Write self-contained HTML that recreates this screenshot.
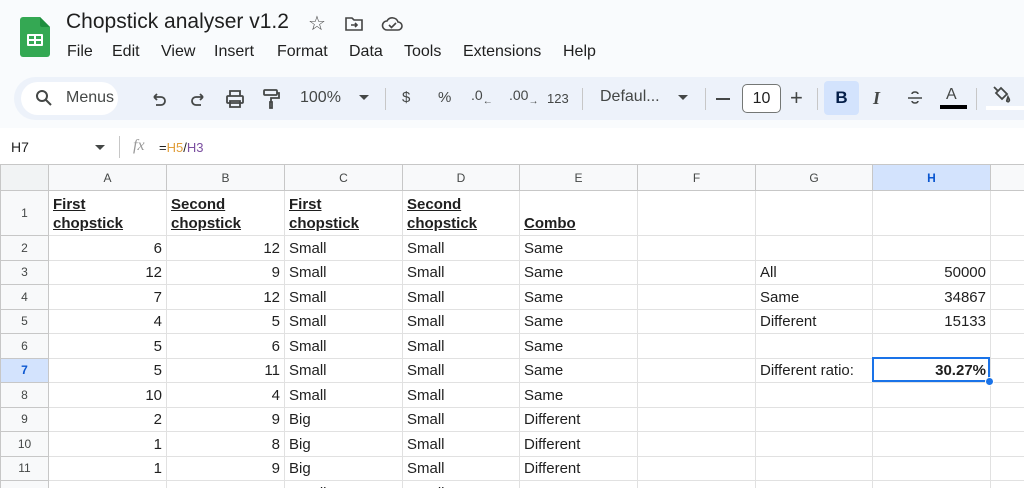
<!DOCTYPE html>
<html><head><meta charset="utf-8"><style>
*{margin:0;padding:0;box-sizing:border-box}
body{width:1024px;height:488px;overflow:hidden;background:#f9fbfd;font-family:"Liberation Sans",Arial,sans-serif;color:#1f1f1f;position:relative}
.a{position:absolute;white-space:nowrap}
.tb{color:#444746;font-size:15px}
#grid{position:absolute;left:0;top:164px;width:1024px;height:324px;background:#fff;overflow:hidden}
table{border-collapse:collapse;table-layout:fixed;position:absolute;left:0;top:0;width:1050px}
td{border:1px solid #e1e1e1;font-size:15px;padding:0 4px;overflow:hidden;white-space:nowrap;height:24.5px;line-height:18px;vertical-align:bottom;padding-bottom:2px}
tr.h td{height:26px;background:#f8f9fa;color:#444746;font-size:12px;text-align:center;vertical-align:middle;border-color:#c7c7c7;padding:0}
td.rn{background:#f8f9fa;color:#444746;font-size:12px;text-align:center;vertical-align:middle;border-color:#c7c7c7;padding:0}
td.r{text-align:right}
td.b{font-weight:bold;text-decoration:underline;line-height:19px}
</style></head><body>
<svg class="a" style="left:20px;top:17px" width="30" height="40" viewBox="0 0 30 40"><path d="M3 0h17l10 10v27a3 3 0 0 1-3 3H3a3 3 0 0 1-3-3V3a3 3 0 0 1 3-3z" fill="#34a853"/><path d="M20 0l10 10H22a2 2 0 0 1-2-2z" fill="#1e8e3e"/><rect x="7" y="17" width="16" height="12" rx="1" fill="#fff"/><rect x="9" y="19" width="5" height="3" fill="#34a853"/><rect x="16" y="19" width="5" height="3" fill="#34a853"/><rect x="9" y="24" width="5" height="3" fill="#34a853"/><rect x="16" y="24" width="5" height="3" fill="#34a853"/></svg>
<div class="a" style="left:66px;top:10px;font-size:21px;color:#1f1f1f">Chopstick analyser v1.2</div>
<div class="a" style="left:308px;top:11px;font-size:20px;color:#444">☆</div>
<svg class="a" style="left:344px;top:16px" width="20" height="16" viewBox="0 0 20 16" fill="none" stroke="#444" stroke-width="1.6"><path d="M2 2h6l2 2h8v10H2z"/><path d="M7 9h6M11 7l2 2-2 2"/></svg>
<svg class="a" style="left:381px;top:15px" width="22" height="18" viewBox="0 0 22 18" fill="none" stroke="#444" stroke-width="1.6"><path d="M6 15h11a4 4 0 0 0 0-8 6 6 0 0 0-11-1 4.5 4.5 0 0 0 0 9z"/><path d="M8 10l2.5 2.5L15 8"/></svg>
<div class="a" style="left:67px;top:43px;font-size:16px">File</div>
<div class="a" style="left:112px;top:43px;font-size:16px">Edit</div>
<div class="a" style="left:161px;top:43px;font-size:16px">View</div>
<div class="a" style="left:214px;top:43px;font-size:16px">Insert</div>
<div class="a" style="left:277px;top:43px;font-size:16px">Format</div>
<div class="a" style="left:349px;top:43px;font-size:16px">Data</div>
<div class="a" style="left:404px;top:43px;font-size:16px">Tools</div>
<div class="a" style="left:463px;top:43px;font-size:16px">Extensions</div>
<div class="a" style="left:563px;top:43px;font-size:16px">Help</div>
<div class="a" style="left:14px;top:77px;width:1030px;height:43px;background:#edf2fa;border-radius:22px"></div>
<div class="a" style="left:21px;top:82px;width:97px;height:33px;background:#fff;border-radius:17px"></div>
<svg class="a" style="left:35px;top:89px" width="18" height="18" viewBox="0 0 18 18" fill="none" stroke="#444746" stroke-width="2"><circle cx="7" cy="7" r="5"/><path d="M11 11l5 5"/></svg>
<div class="a tb" style="left:66px;top:89px;font-size:16px">Menus</div>
<svg class="a" style="left:150px;top:90px" width="18" height="18" viewBox="0 0 18 18" fill="none" stroke="#444746" stroke-width="1.8"><path d="M4 7h7a4 4 0 0 1 0 8H6M4 7l3-3M4 7l3 3"/></svg>
<svg class="a" style="left:189px;top:90px" width="18" height="18" viewBox="0 0 18 18" fill="none" stroke="#444746" stroke-width="1.8"><path d="M14 7H7a4 4 0 0 0 0 8h5M14 7l-3-3M14 7l-3 3"/></svg>
<svg class="a" style="left:225px;top:89px" width="20" height="20" viewBox="0 0 20 20" fill="none" stroke="#444746" stroke-width="1.8"><rect x="2" y="7" width="16" height="7" rx="1"/><path d="M5 7V2h10v5M5 12h10v6H5z"/></svg>
<svg class="a" style="left:262px;top:88px" width="18" height="22" viewBox="0 0 18 22" fill="none" stroke="#444746" stroke-width="1.8"><rect x="2" y="2" width="13" height="5" rx="1"/><path d="M15 5h2v5H9v4M8 14h2v6H8z"/></svg>
<div class="a tb" style="left:300px;top:89px;font-size:16px">100%</div>
<div class="a" style="left:359px;top:95px;border:5px solid transparent;border-top-color:#444746"></div>
<div class="a" style="left:385px;top:88px;width:1px;height:22px;background:#c7c7c7"></div>
<div class="a tb" style="left:402px;top:89px;font-size:15px">$</div>
<div class="a tb" style="left:438px;top:89px;font-size:15px">%</div>
<div class="a tb" style="left:471px;top:87px;font-size:14px">.0<sub style="font-size:10px">←</sub></div>
<div class="a tb" style="left:509px;top:87px;font-size:14px">.00<sub style="font-size:10px">→</sub></div>
<div class="a tb" style="left:547px;top:91px;font-size:13px">123</div>
<div class="a" style="left:582px;top:88px;width:1px;height:22px;background:#c7c7c7"></div>
<div class="a tb" style="left:600px;top:88px;font-size:16px">Defaul...</div>
<div class="a" style="left:678px;top:95px;border:5px solid transparent;border-top-color:#444746"></div>
<div class="a" style="left:705px;top:88px;width:1px;height:22px;background:#c7c7c7"></div>
<div class="a" style="left:716px;top:98px;width:14px;height:2px;background:#444746"></div>
<div class="a" style="left:742px;top:84px;width:39px;height:29px;border:1px solid #747775;border-radius:5px;background:#fff;font-size:16px;text-align:center;line-height:27px;color:#1f1f1f">10</div>
<div class="a tb" style="left:790px;top:85px;font-size:22px">+</div>
<div class="a" style="left:817px;top:88px;width:1px;height:22px;background:#c7c7c7"></div>
<div class="a" style="left:824px;top:81px;width:35px;height:34px;background:#d3e3fd;border-radius:4px;text-align:center;line-height:34px;font-weight:bold;font-size:17px;color:#041e49">B</div>
<div class="a" style="left:873px;top:88px;font-size:18px;font-style:italic;font-family:'Liberation Serif',serif;color:#444746;font-weight:bold">I</div>
<svg class="a" style="left:906px;top:89px" width="18" height="18" viewBox="0 0 18 18" fill="none" stroke="#444746" stroke-width="1.6"><path d="M2 9h14M12 5a3 2 0 0 0-6 0M6 12a3 2 0 0 0 6 0"/></svg>
<div class="a tb" style="left:946px;top:86px;font-size:16px">A</div>
<div class="a" style="left:940px;top:105px;width:27px;height:4px;background:#000"></div>
<div class="a" style="left:976px;top:88px;width:1px;height:22px;background:#c7c7c7"></div>
<svg class="a" style="left:990px;top:84px" width="22" height="22" viewBox="0 0 22 22" fill="none" stroke="#444746" stroke-width="1.8"><path d="M4 3l4 4M6 9l5-5 6 6-5 5zM18 13c1 2 2 3 1 4a1 1 0 0 1-2-1z"/></svg>
<div class="a" style="left:986px;top:106px;width:40px;height:4px;background:#fff"></div>
<div class="a" style="left:0;top:128px;width:1024px;height:36px;background:#fff"></div>
<div class="a" style="left:11px;top:139px;font-size:14px">H7</div>
<div class="a" style="left:95px;top:145px;border:5px solid transparent;border-top-color:#444746"></div>
<div class="a" style="left:119px;top:136px;width:1px;height:22px;background:#c7c7c7"></div>
<div class="a" style="left:133px;top:137px;font-size:16px;font-style:italic;color:#999;font-family:'Liberation Serif',serif">fx</div>
<div class="a" style="left:159px;top:140px;font-size:13px;color:#1f1f1f">=<span style="color:#e19f3c">H5</span>/<span style="color:#7b4fa0">H3</span></div>
<div id="grid">
<table>
<colgroup><col style="width:48px"><col style="width:118px"><col style="width:118px"><col style="width:118px"><col style="width:117px"><col style="width:118px"><col style="width:118px"><col style="width:117px"><col style="width:118px"><col style="width:60px"></colgroup>
<tr class="h"><td style="background:#f1f3f4"></td><td>A</td><td>B</td><td>C</td><td>D</td><td>E</td><td>F</td><td>G</td><td style="background:#d3e3fd;color:#0b57d0;font-weight:bold">H</td><td></td></tr>
<tr style="height:45px"><td class="rn">1</td><td class="b">First<br>chopstick</td><td class="b">Second<br>chopstick</td><td class="b">First<br>chopstick</td><td class="b">Second<br>chopstick</td><td class="b">Combo</td><td></td><td></td><td></td><td></td></tr>
<tr><td class="rn">2</td><td class="r">6</td><td class="r">12</td><td>Small</td><td>Small</td><td>Same</td><td></td><td></td><td></td><td></td></tr>
<tr><td class="rn">3</td><td class="r">12</td><td class="r">9</td><td>Small</td><td>Small</td><td>Same</td><td></td><td>All</td><td class="r">50000</td><td></td></tr>
<tr><td class="rn">4</td><td class="r">7</td><td class="r">12</td><td>Small</td><td>Small</td><td>Same</td><td></td><td>Same</td><td class="r">34867</td><td></td></tr>
<tr><td class="rn">5</td><td class="r">4</td><td class="r">5</td><td>Small</td><td>Small</td><td>Same</td><td></td><td>Different</td><td class="r">15133</td><td></td></tr>
<tr><td class="rn">6</td><td class="r">5</td><td class="r">6</td><td>Small</td><td>Small</td><td>Same</td><td></td><td></td><td></td><td></td></tr>
<tr><td class="rn" style="background:#d3e3fd;color:#0b57d0;font-weight:bold">7</td><td class="r">5</td><td class="r">11</td><td>Small</td><td>Small</td><td>Same</td><td></td><td>Different ratio:</td><td class="r" style="font-weight:bold">30.27%</td><td></td></tr>
<tr><td class="rn">8</td><td class="r">10</td><td class="r">4</td><td>Small</td><td>Small</td><td>Same</td><td></td><td></td><td></td><td></td></tr>
<tr><td class="rn">9</td><td class="r">2</td><td class="r">9</td><td>Big</td><td>Small</td><td>Different</td><td></td><td></td><td></td><td></td></tr>
<tr><td class="rn">10</td><td class="r">1</td><td class="r">8</td><td>Big</td><td>Small</td><td>Different</td><td></td><td></td><td></td><td></td></tr>
<tr><td class="rn">11</td><td class="r">1</td><td class="r">9</td><td>Big</td><td>Small</td><td>Different</td><td></td><td></td><td></td><td></td></tr>
<tr><td class="rn">12</td><td class="r">7</td><td class="r">6</td><td>Small</td><td>Small</td><td>Same</td><td></td><td></td><td></td><td></td></tr>
</table>
<div class="a" style="left:872px;top:193px;width:118px;height:25px;border:2px solid #1a73e8"></div>
<div class="a" style="left:985px;top:213px;width:9px;height:9px;border-radius:50%;background:#1a73e8;border:1px solid #fff"></div>
</div>
</body></html>
